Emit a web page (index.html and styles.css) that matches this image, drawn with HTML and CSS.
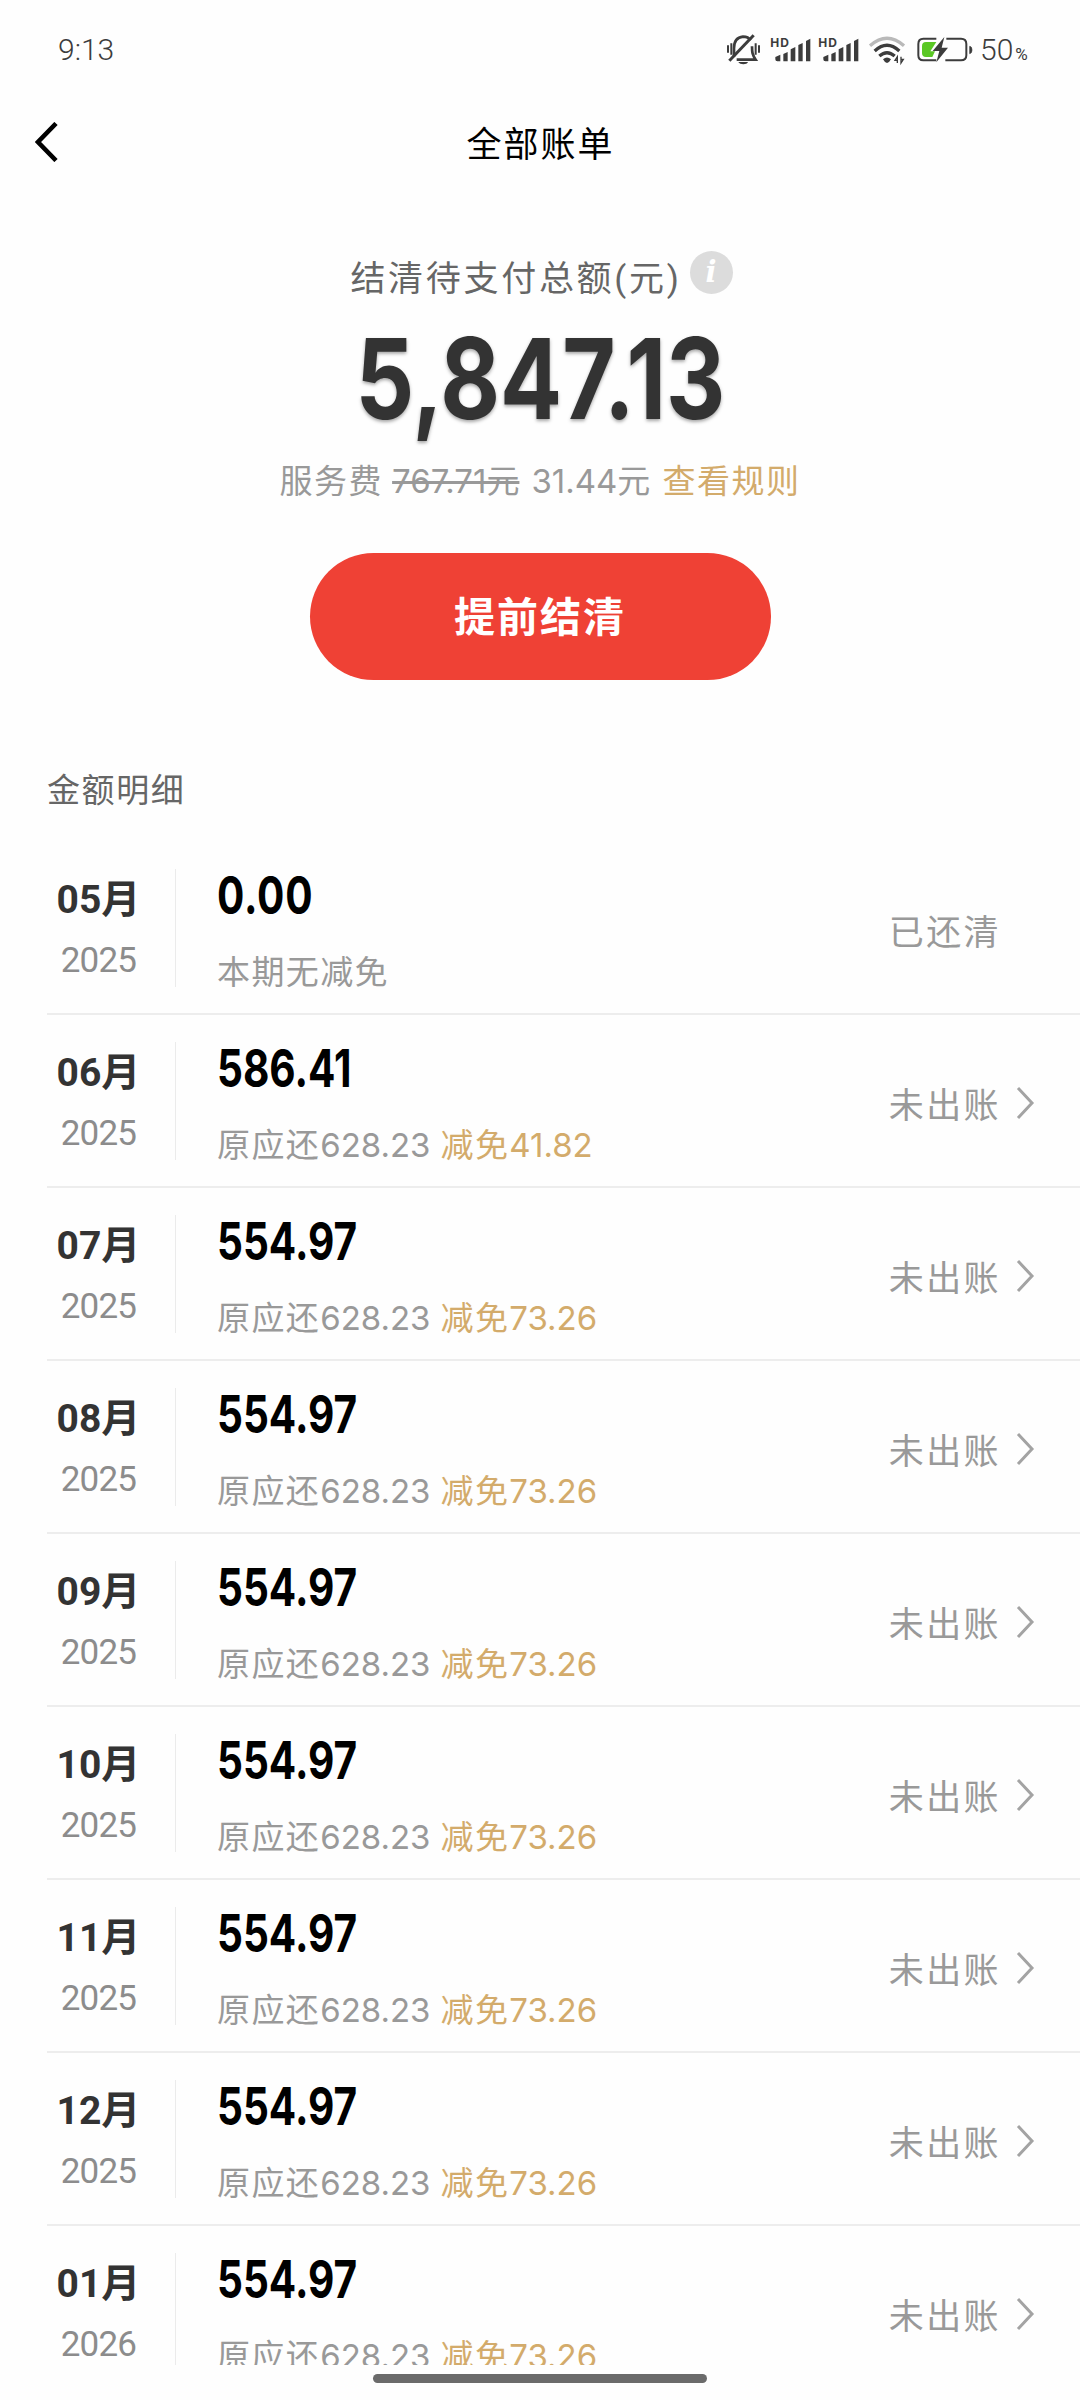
FILE: index.html
```
<!DOCTYPE html>
<html lang="zh-CN">
<head>
    <meta charset="UTF-8">
    <meta name="viewport" content="width=device-width, initial-scale=1.0">
    <title>全部账单</title>
    <link rel="stylesheet" href="styles.css">
</head>
<body>
    <div class="status-bar">
        <span class="time">9:13</span>
        <div class="status-right">
            <svg class="status-icons" width="252" height="36" viewBox="0 0 756 108" fill="none" stroke="#3c3c3c">
                <!-- muted bell -->
                <g stroke-width="8">
                    <path d="M30 74V49C30 27 38 16 57 14C70 14 76 19 79 25M84 43C84 61 85 68 95 83H38"/>
                    <path d="M16 86L89 10" stroke-width="9"/>
                    <path d="M12 40V62M105 40V62M22 34V68M95 34V68" stroke-width="6"/>
                    <path d="M43 90H72C69 99 48 99 43 90Z" fill="#3c3c3c" stroke="none"/>
                </g>
                <!-- signal, sim 1 and sim 2 -->
                <g fill="#3c3c3c" stroke="none">
                    <text class="hd" x="139" y="44" textLength="56">HD</text>
                    <path d="M154 82V75L169 68V88H160Q154 88 154 82ZM178 66L191 60V88H178ZM200 52L214 45V88H200ZM223 39L236 33V88H223ZM246 27L259 20V88H246Z"/>
                    <text class="hd" x="283" y="44" textLength="56">HD</text>
                    <path d="M298 82V75L313 68V88H304Q298 88 298 82ZM322 66L335 60V88H322ZM344 52L358 45V88H344ZM367 39L380 33V88H367ZM390 27L403 20V88H390Z"/>
                </g>
                <!-- wifi -->
                <g stroke-width="10">
                    <path d="M438 41Q489 -4 540 41" stroke="#b9b9b9"/>
                    <path d="M452 57Q489 23 526 57"/>
                    <path d="M466 72Q489 52 512 72"/>
                    <path d="M477 82Q489 71 501 82Q495 93 489 93Q483 93 477 82Z" fill="#3c3c3c" stroke="none"/>
                    <path d="M520 93V74L513 85H520M531 74V93L538 82H531" stroke-width="4"/>
                </g>
                <!-- battery, charging -->
                <path d="M637 20H598Q583 20 583 36V70Q583 85 598 85H637" stroke-width="6"/>
                <path d="M667 20H711Q727 20 727 36V70Q727 85 711 85H664" stroke-width="6"/>
                <path d="M737 43Q744 44 744 54Q744 64 737 65Z" fill="#3c3c3c" stroke-width="2"/>
                <path d="M606 30H637L619 58H633L625 75H606Q594 75 594 64V42Q594 30 606 30Z" fill="#5ac725" stroke="none"/>
                <path d="M661 15L626 57H646L637 91L672 47H653Z" fill="#3c3c3c" stroke="none"/>
            </svg>
            <span class="battery-text">50<small>%</small></span>
        </div>
    </div>

    <div class="nav-bar">
        <svg class="back" width="24" height="40" viewBox="0 0 24 40" fill="none" stroke="#000" stroke-width="4.6">
            <path d="M21 1.5L3 20L21 38.5"/>
        </svg>
        <h1>全部账单</h1>
    </div>

    <div class="summary">
        <div class="summary-title">
            <span>结清待支付总额(元)</span>
            <i class="info">i</i>
        </div>
        <div class="total"><span>5,847.13</span></div>
        <div class="fee">
            <span>服务费</span>
            <del>767.71元</del>
            <span class="fee-now">31.44元</span>
            <a class="gold">查看规则</a>
        </div>
        <button class="settle">提前结清</button>
    </div>

    <h2>金额明细</h2>

    <div class="bills" id="bills"></div>

    <div class="home-bar"></div>

    <script>
        const bills = [
            { month: '05', year: 2025, amount: '0.00' },
            { month: '06', year: 2025, amount: '586.41', off: '41.82' },
            { month: '07', year: 2025, amount: '554.97', off: '73.26' },
            { month: '08', year: 2025, amount: '554.97', off: '73.26' },
            { month: '09', year: 2025, amount: '554.97', off: '73.26' },
            { month: '10', year: 2025, amount: '554.97', off: '73.26' },
            { month: '11', year: 2025, amount: '554.97', off: '73.26' },
            { month: '12', year: 2025, amount: '554.97', off: '73.26' },
            { month: '01', year: 2026, amount: '554.97', off: '73.26' }
        ];

        const arrow = '<svg class="arrow" width="20" height="34" viewBox="0 0 20 34" fill="none" stroke="#a3a3a3" stroke-width="3"><path d="M2 2L16 17L2 32"/></svg>';

        document.getElementById('bills').innerHTML = bills.map(bill => `
            <div class="bill">
                <div class="date">
                    <div class="month">${bill.month}月</div>
                    <div class="year">${bill.year}</div>
                </div>
                <div class="detail">
                    <div class="amount ${bill.off ? '' : 'paid'}">${bill.amount}</div>
                    <div class="note">${bill.off ? `原应还<span class="num">628.23</span><span class="gold">减免<span class="num">${bill.off}</span></span>` : '本期无减免'}</div>
                </div>
                <div class="state">${bill.off ? '未出账' : '已还清'}</div>
                ${bill.off ? arrow : ''}
            </div>`).join('');
    </script>
</body>
</html>
```

FILE: styles.css
```
* {
    box-sizing: border-box;
}
body {
    font-family: Roboto, "Noto Sans CJK SC", sans-serif;
    display: flex;
    flex-direction: column;
    width: 1080px;
    height: 2400px;
    margin: 0;
    overflow: hidden;
    background-color: #fefefe;
    color: #333;
}
.status-bar {
    display: flex;
    justify-content: space-between;
    height: 100px;
    padding: 30px 51px 0 58px;
    line-height: 40px;
    color: #3c3c3c;
}
.time {
    font-size: 30px;
    font-weight: 300;
}
.status-right {
    display: flex;
}
.status-icons {
    margin: 2px 4px 0 0;
}
.hd {
    font-family: Inter, sans-serif;
    font-size: 36px;
    font-weight: 700;
}
.battery-text {
    width: 49px;
    font-size: 30px;
    font-weight: 300;
    white-space: nowrap;
}
.battery-text small {
    margin-left: 2px;
    font-size: 17px;
    font-weight: 400;
}
.nav-bar {
    display: flex;
    align-items: center;
    height: 84px;
    padding: 0 35px;
}
.back {
    flex: none;
}
h1 {
    flex: 1;
    margin: 7px 23px 0 0;
    font-size: 35px;
    font-weight: 400;
    line-height: 50px;
    letter-spacing: 2px;
    text-align: center;
    color: #000;
}
.summary {
    display: flex;
    flex-direction: column;
    align-items: center;
    padding-top: 62px;
}
.summary-title {
    display: flex;
    height: 62px;
    margin-left: 3px;
    font-size: 35px;
    line-height: 68px;
    letter-spacing: 2.7px;
    color: #666;
}
.info {
    width: 43px;
    height: 43px;
    margin: 5px 0 0 8px;
    border-radius: 50%;
    background-color: #dcdcdc;
    font-family: "DejaVu Serif", serif;
    font-size: 29px;
    font-weight: 700;
    line-height: 42px;
    letter-spacing: 0;
    text-align: center;
    color: #fff;
}
.total {
    height: 140px;
    font-family: Inter, sans-serif;
    font-size: 112px;
    font-weight: 700;
    line-height: 140px;
    text-shadow: 0 2px 4px rgba(0, 0, 0, 0.35);
}
.total span {
    display: inline-block;
    transform: scaleX(0.82);
}
.fee {
    display: flex;
    height: 50px;
    margin-top: 7px;
    font-family: Inter, "Noto Sans CJK SC", sans-serif;
    font-size: 33px;
    line-height: 53px;
    letter-spacing: 1.5px;
    color: #999;
}
.fee del {
    margin-left: 9px;
    letter-spacing: 0;
}
.fee-now {
    margin: 0 12px;
    letter-spacing: 0;
}
.gold {
    color: #d3ab6b;
}
.settle {
    width: 461px;
    height: 127px;
    margin-top: 48px;
    padding-bottom: 6px;
    border: none;
    border-radius: 64px;
    background-color: #ef4135;
    font-family: inherit;
    font-size: 41px;
    font-weight: 700;
    letter-spacing: 2px;
    color: #fff;
}
h2 {
    height: 50px;
    margin: 85px 0 0 47px;
    font-size: 33px;
    font-weight: 400;
    line-height: 52px;
    letter-spacing: 1.6px;
    color: #666;
}
.bills {
    height: 1523px;
    margin-top: 27px;
    padding-left: 47px;
    overflow: hidden;
}
.bill {
    display: flex;
    height: 173px;
    padding: 27px 44px 26px 0;
    border-bottom: 2px solid #ededed;
}
.date {
    width: 129px;
    padding-right: 25px;
    border-right: 1px solid #ebebeb;
    text-align: center;
}
.month {
    height: 60px;
    font-size: 39px;
    font-weight: 700;
    line-height: 63px;
    white-space: nowrap;
}
.year {
    height: 60px;
    font-size: 35px;
    line-height: 63px;
    letter-spacing: -0.8px;
    color: #8c8c8c;
}
.detail {
    flex: 1;
    padding-left: 41px;
}
.amount {
    height: 56px;
    font-family: Inter, sans-serif;
    font-size: 52px;
    font-weight: 700;
    line-height: 53px;
    color: #000;
    transform: scaleX(0.78);
    transform-origin: left;
}
.amount.paid {
    letter-spacing: 1px;
}
.note {
    height: 60px;
    margin-top: 18px;
    font-family: Inter, "Noto Sans CJK SC", sans-serif;
    font-size: 33px;
    line-height: 58px;
    letter-spacing: 1.4px;
    color: #999;
}
.note .num {
    letter-spacing: 0;
}
.note .gold {
    margin-left: 10px;
}
.state {
    margin-right: 35px;
    padding-top: 38px;
    font-size: 35px;
    line-height: 54px;
    letter-spacing: 2.4px;
    color: #999;
}
.bill .arrow {
    margin: 44px 0 0 -20px;
}
.home-bar {
    width: 334px;
    height: 9px;
    margin: 9px 0 0 373px;
    border-radius: 5px;
    background-color: #6b6b6b;
}
```
